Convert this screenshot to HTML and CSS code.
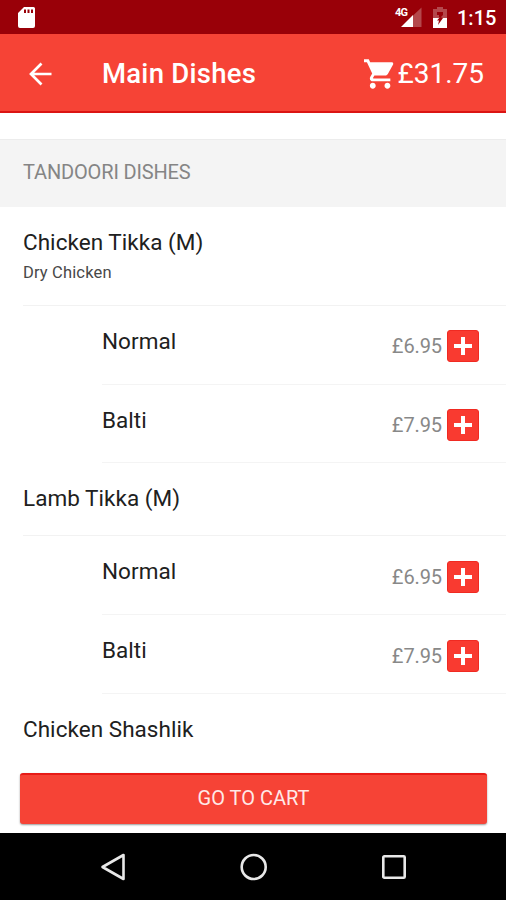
FILE: index.html
```html
<!DOCTYPE html>
<html lang="en">
<head>
<meta charset="utf-8">
<title>Main Dishes</title>
<link rel="stylesheet" href="styles.css">
</head>
<body>
<div class="screen">
  <div class="status">
    <svg class="sd" width="17" height="21" viewBox="0 0 17 21"><path fill="#fff" fill-rule="evenodd" d="M6 0H15.500Q17 0 17 1.500V19Q17 21 15 21H2Q0 21 0 19V6ZM6 2.500V6H8V2.500ZM9.500 2.500V6H11.500V2.500ZM13 2.500V6H15V2.500Z"/></svg>
    <div class="status-right">
      <span class="net">4G</span>
      <svg class="signal" width="21" height="20" viewBox="0 0 21 20"><path fill="#b4484c" d="M12 8.500L20.500 0.500V20H12Z"/><path fill="#fff" d="M0 20L12 8V20Z"/></svg>
      <svg class="battery" width="14" height="21" viewBox="0 0 14 21"><path fill="#b4484c" d="M4 0H10V2H14V11H0V2H4Z"/><path fill="#fff" d="M0 11H14V21H0Z"/><path fill="#990008" d="M4 5H10V8L8 10H6V8H4ZM7 10L10 11L5 18L6 13.500H4Z"/></svg>
      <span class="clock">1:15</span>
    </div>
  </div>
  <header class="bar">
    <svg class="back" width="24" height="24" viewBox="0 0 24 24"><path fill="none" stroke="#fff" stroke-width="2.700" d="M23.500 12H2.500M13.500 1.500L3 12L13.500 22.500"/></svg>
    <h1 class="title">Main Dishes</h1>
    <svg class="cart" width="30" height="30" viewBox="1 2 20.500 20"><path fill="#fff" d="M7 18c-1.100 0-1.990.900-1.990 2S5.900 22 7 22s2-.900 2-2-.900-2-2-2zM1 2v2h2l3.600 7.590-1.350 2.450c-.160.280-.250.610-.250.960 0 1.100.900 2 2 2h12v-2H7.420c-.140 0-.250-.110-.250-.250l.030-.120.900-1.630h7.450c.750 0 1.410-.410 1.750-1.030l3.580-6.490c.080-.140.120-.310.120-.480 0-.550-.450-1-1-1H5.210l-.940-2H1zm16 16c-1.100 0-1.990.900-1.990 2s.890 2 1.990 2 2-.900 2-2-.900-2-2-2z"/></svg>
    <span class="total">£31.75</span>
  </header>
  <main class="content">
    <h2 class="section">TANDOORI DISHES</h2>
    <div class="dish tall"><div class="name">Chicken Tikka (M)</div><div class="desc">Dry Chicken</div></div>
    <div class="option"><span class="name">Normal</span><span class="price">£6.95</span><span class="add"></span></div>
    <div class="option last"><span class="name">Balti</span><span class="price">£7.95</span><span class="add"></span></div>
    <div class="dish"><div class="name">Lamb Tikka (M)</div></div>
    <div class="option low"><span class="name">Normal</span><span class="price">£6.95</span><span class="add"></span></div>
    <div class="option low"><span class="name">Balti</span><span class="price">£7.95</span><span class="add"></span></div>
    <div class="dish end"><div class="name">Chicken Shashlik</div></div>
  </main>
  <footer class="footer"><div class="go">GO TO CART</div></footer>
  <nav class="nav">
    <svg width="26" height="28" viewBox="0 0 26 28"><path fill="none" stroke="#e8e8e8" stroke-width="2.600" stroke-linejoin="round" d="M23.500 2V26L2.500 14Z"/></svg>
    <svg width="28" height="28" viewBox="0 0 28 28"><circle cx="13.700" cy="14" r="12" fill="none" stroke="#e8e8e8" stroke-width="2.600"/></svg>
    <svg width="24" height="24" viewBox="0 0 24 24"><rect x="1.300" y="1.300" width="21.400" height="21.400" rx="1" fill="none" stroke="#e8e8e8" stroke-width="2.600"/></svg>
  </nav>
</div>
</body>
</html>
```

FILE: styles.css
```css
* { box-sizing: border-box; }
body { margin: 0; background: #fff; font-family: Roboto, "Liberation Sans", sans-serif; }
.screen { width: 506px; height: 900px; display: flex; flex-direction: column; overflow: hidden; white-space: nowrap; }
.status { height: 34px; flex: none; background: #990008; display: flex; justify-content: space-between; padding: 7px 11px 0 18px; }
.status-right { display: flex; color: #fff; }
.net { font-size: 11px; line-height: 11px; font-weight: 700; width: 6px; letter-spacing: -0.8px; }
.signal { margin: 0 11px 0 0; }
.battery { margin-right: 10px; }
.clock { width: 38px; font-size: 20px; line-height: 23px; font-weight: 500; }
.bar { height: 79px; flex: none; background: #f64336; border-bottom: 2px solid #db1413; color: #fff; display: flex; align-items: center; padding: 2px 22px 0 28px; }
.back { flex: none; }
.title { margin: 0 0 0 50px; flex: 1; font-size: 27.5px; line-height: 32px; font-weight: 500; letter-spacing: 0.25px; }
.cart { flex: none; }
.total { margin-left: 3px; font-size: 28px; line-height: 32px; }
.content { flex: 1; min-height: 0; overflow: hidden; padding-top: 26px; }
.section { margin: 0; height: 68px; padding: 0 0 2px 23px; background: #f4f4f4; border-top: 1px solid #ececec; color: #858585; font-size: 20px; line-height: 64px; font-weight: 400; letter-spacing: -0.15px; }
.name { font-size: 22.5px; line-height: 28px; color: #202020; letter-spacing: 0.04px; }
.dish { height: 73px; margin-left: 23px; padding-top: 21px; border-bottom: 1px solid #f2f2f2; }
.tall { height: 99px; }
.end { border: 0; }
.desc { margin-top: 7px; font-size: 16.5px; line-height: 20px; color: #484848; letter-spacing: 0.15px; }
.option { height: 79px; margin-left: 102px; border-bottom: 1px solid #f4f4f4; display: flex; align-items: flex-start; padding: 21px 27px 0 0; }
.last { height: 78px; }
.option .name { flex: 1; }
.price { font-size: 20px; line-height: 24px; margin: 7px 5px 0 0; color: #888; letter-spacing: -0.1px; }
.add { width: 32px; height: 32px; margin-top: 3px; border-radius: 3px; border: 1px solid #f02a22; background: linear-gradient(#fff, #fff) center / 18px 4px no-repeat, linear-gradient(#fff, #fff) center / 4px 18px no-repeat, #f93a30; }
.low .price { margin-top: 8px; }
.low .add { margin-top: 4px; }
.footer { height: 60px; flex: none; padding: 0 19px 0 20px; }
.go { height: 51px; border-radius: 3px; background: #f64336; border-top: 2px solid #e71b17; box-shadow: 0 1px 2px rgba(0, 0, 0, 0.4); color: #ffe9e7; font-size: 20px; line-height: 46px; text-align: center; }
.nav { height: 67px; flex: none; background: #000; display: flex; align-items: center; justify-content: space-between; padding: 0 100px 0 100px; }
```
